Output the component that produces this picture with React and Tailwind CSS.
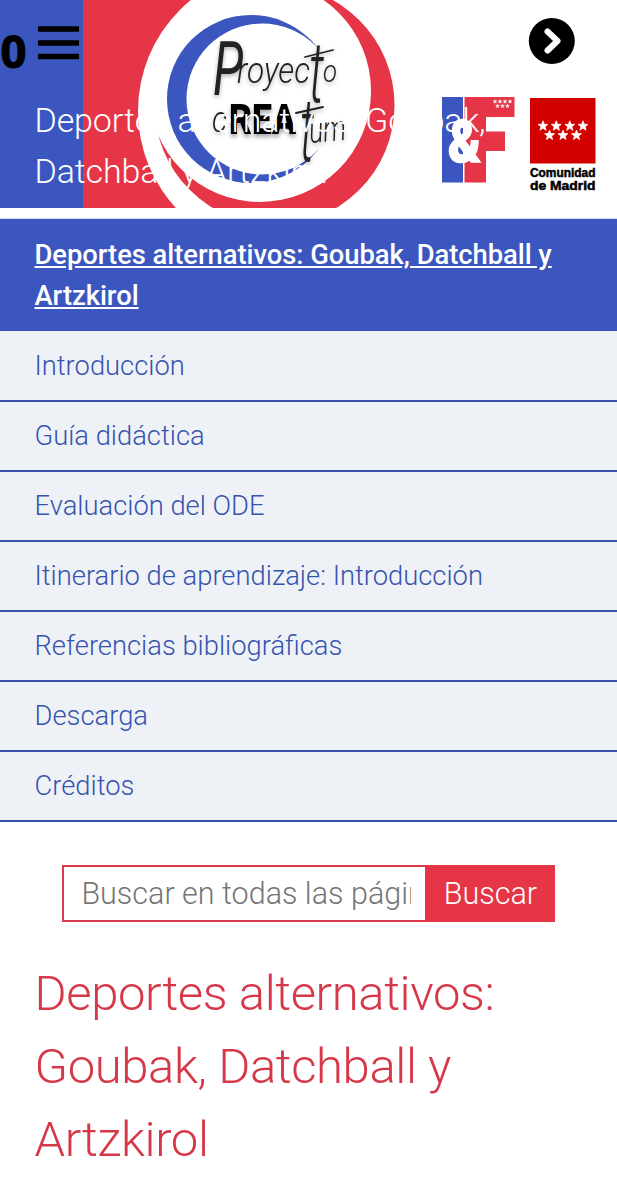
const TITLE = 'Deportes alternativos: Goubak, Datchball y Artzkirol'

const links = [
  'Introducción',
  'Guía didáctica',
  'Evaluación del ODE',
  'Itinerario de aprendizaje: Introducción',
  'Referencias bibliográficas',
  'Descarga',
  'Créditos',
]

const bigStars = [[543, 126], [556.3, 126], [569.8, 126], [583, 126], [549.5, 135.3], [563, 135.3], [576.5, 135.3]]
const smallStars = [[495, 101.5], [500, 101.5], [505, 101.5], [510, 101.5], [497.5, 106], [502.5, 106], [507.5, 106]]

function Star({ x, y, size }) {
  return (
    <path
      transform={`translate(${x} ${y}) scale(${size})`}
      d="M0 -1 L.25 -.33 L.95 -.31 L.4 .13 L.59 .81 L0 .42 L-.59 .81 L-.4 .13 L-.95 -.31 L-.25 -.33Z"
      fill="#fff"
      stroke="#fff"
      strokeWidth=".15"
    />
  )
}

function Banner() {
  return (
    <svg className="absolute inset-0 font-[Roboto,sans-serif]" width="617" height="208" viewBox="0 0 617 208">
      <rect width="83.5" height="208" fill="#3b57bf" />
      <rect x="83" width="147" height="208" fill="#e53546" />
      <circle cx="281" cy="111" r="143" fill="#fff" />

      {/* lunas roja y azul */}
      <circle cx="274.5" cy="105" r="120" fill="#e53546" />
      <circle cx="260" cy="91" r="111" fill="#fff" />
      <circle cx="251" cy="99" r="84" fill="#3b57bf" />
      <circle cx="262" cy="99" r="75.5" fill="#fff" />

      {/* Proyecto cREAtum */}
      <g className="italic" fill="#222" style={{ filter: 'drop-shadow(0 2px 2px rgba(0,0,0,.3))' }}>
        <g fontWeight="300">
          <text x="213" y="95" fontSize="76" textLength="30" lengthAdjust="spacingAndGlyphs" fontWeight="400">P</text>
          <text x="237" y="83" fontSize="36" textLength="73" lengthAdjust="spacingAndGlyphs">royec</text>
          <text x="309" y="102" fontSize="86" textLength="15" lengthAdjust="spacingAndGlyphs">t</text>
          <text x="323" y="82" fontSize="32" textLength="14" lengthAdjust="spacingAndGlyphs">o</text>
          <text x="212" y="132" fontSize="36" textLength="15" lengthAdjust="spacingAndGlyphs">c</text>
          <text x="300" y="161" fontSize="88" textLength="14" lengthAdjust="spacingAndGlyphs">t</text>
          <text x="310" y="143" fontSize="36" textLength="37" lengthAdjust="spacingAndGlyphs" transform="rotate(-5 310 143)">um</text>
        </g>
        {/* trazos largos sobre el texto */}
        <path d="M305 57L333 50M296 113L323 107" fill="none" stroke="#222" strokeWidth="1.8" strokeLinecap="round" />
      </g>
      <text
        x="229"
        y="134"
        fontSize="43"
        fontWeight="900"
        textLength="67"
        lengthAdjust="spacingAndGlyphs"
        style={{ filter: 'drop-shadow(0 3px 2px rgba(0,0,0,.35))' }}
      >
        REA
      </text>

      {/* E&F */}
      <rect x="442" y="97" width="21" height="85.5" fill="#3b57bf" />
      <path d="M464.5 97H514.5V117H486V131.5H505V151H486V182.5H464.5Z" fill="#e53546" />
      <text x="448" y="162" fontSize="60" fontWeight="900" fill="#fff" stroke="#fff" strokeWidth="1.5" textLength="33" lengthAdjust="spacingAndGlyphs">&amp;</text>
      {smallStars.map(([x, y], i) => <Star key={i} x={x} y={y} size={2.1} />)}

      {/* Comunidad de Madrid */}
      <rect x="530" y="98" width="65.5" height="65.5" fill="#d30000" />
      {bigStars.map(([x, y], i) => <Star key={i} x={x} y={y} size={5.2} />)}
      <g className="font-['Liberation_Sans',sans-serif]" fontSize="12.5" fontWeight="700" stroke="#000" strokeWidth=".5">
        <text x="530" y="177" textLength="65.5" lengthAdjust="spacingAndGlyphs">Comunidad</text>
        <text x="530" y="190" textLength="65.5" lengthAdjust="spacingAndGlyphs">de Madrid</text>
      </g>
    </svg>
  )
}

function Controls() {
  return (
    <svg className="absolute inset-0" width="617" height="80" viewBox="0 0 617 80">
      <text x="0.5" y="68" fontSize="45" fontWeight="700" stroke="#000" textLength="26" lengthAdjust="spacingAndGlyphs" className="font-['Open_Sans',sans-serif]">0</text>
      <path d="M38 29H79M38 43H79M38 56.5H79" stroke="#000" strokeWidth="5.3" />
      <circle cx="551.8" cy="41" r="23" />
      <path d="M547.5 31.5L557.5 41L547.5 50.5" fill="none" stroke="#fff" strokeWidth="6" strokeLinecap="round" strokeLinejoin="round" />
    </svg>
  )
}

export default function App() {
  return (
    <div className="h-[1200px] w-[617px] overflow-hidden bg-white font-[Roboto,sans-serif] font-light">
      <header className="relative h-[218px] pt-[95px] pl-[34.5px]">
        <Banner />
        <Controls />
        <p className="relative w-[500px] text-[34px] leading-[51px] tracking-[-0.12px] text-white">{TITLE}</p>
      </header>

      <nav className="border-t border-[#cfdaf0] text-[27.35px] leading-[41px] text-[#3653ae]">
        <a href="#" className="block h-[112.4px] bg-[#3b57bf] px-[34.5px] pt-[16px] font-medium tracking-[-0.03px] text-white underline">
          {TITLE}
        </a>
        <ul>
          {links.map((link) => (
            <li key={link} className="h-[70.15px] border-b-2 border-[#3653a8] bg-[#eef2f7] px-[34.5px] pt-[14.2px]">
              <a href="#">{link}</a>
            </li>
          ))}
        </ul>
      </nav>

      <form className="mt-[42.6px] ml-[62.4px] flex h-[57px] w-[493px] text-[30.5px]">
        <input
          type="text"
          placeholder="Buscar en todas las páginas"
          className="w-[363px] border-2 border-r-0 border-[#db3a4a] pr-[14px] pl-[17px] placeholder:text-[#757575]"
        />
        <button type="button" className="flex-1 bg-[#e53546] text-white">Buscar</button>
      </form>

      <h1 className="mt-[35px] ml-[34.5px] w-[520px] text-[49px] leading-[73px] tracking-[-0.38px] text-[#d63849]">{TITLE}</h1>
    </div>
  )
}
